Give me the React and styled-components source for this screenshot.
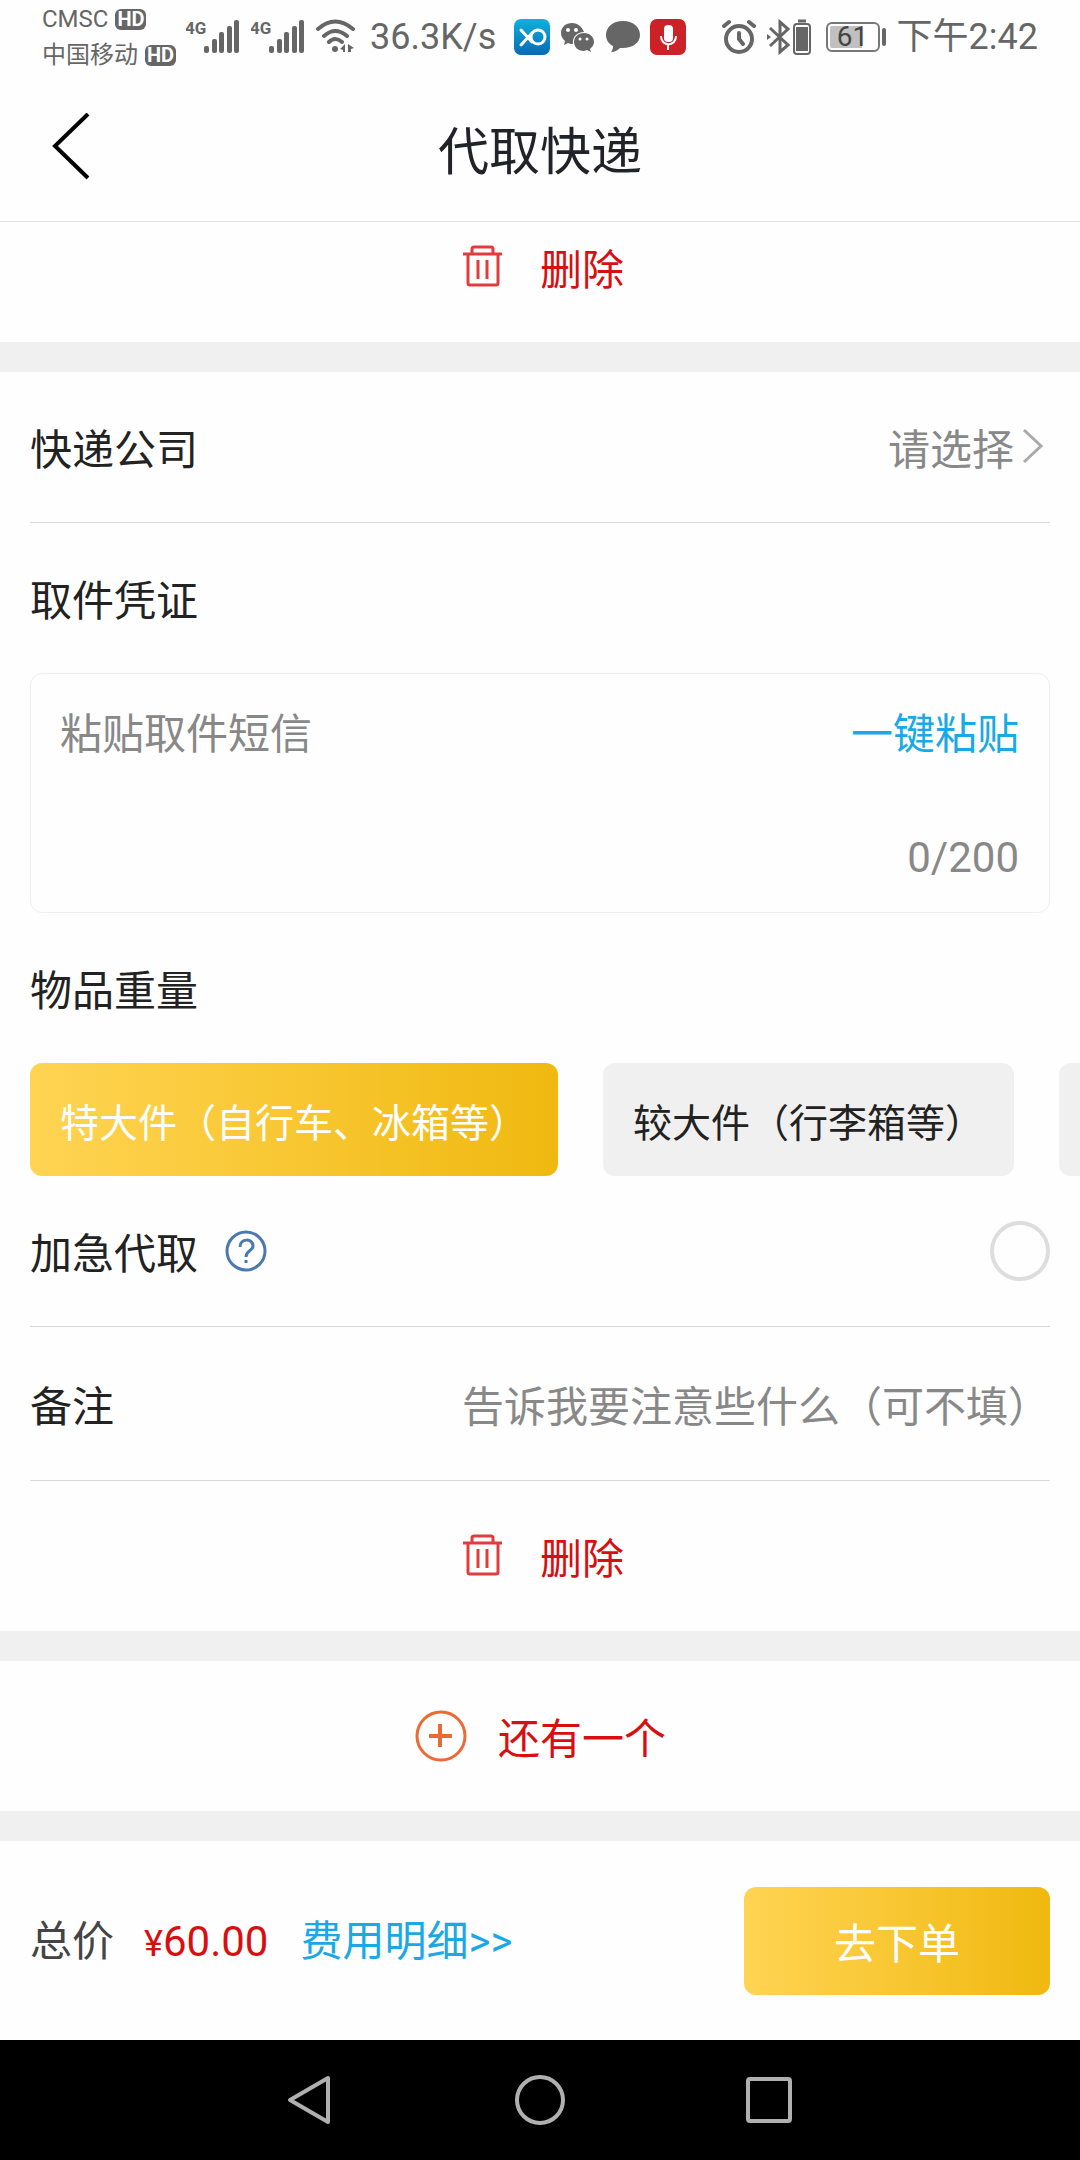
import React, { useState } from 'react'

import styled, { createGlobalStyle, css } from 'styled-components';


const GlobalStyle=createGlobalStyle`
*{
  box-sizing:border-box;
}
body{
  margin:0;
  background-color:#fefefe;
  color:#222;
  font-family:"Noto Sans CJK SC",sans-serif;
  font-size:42px;
  line-height:60px;
}
button,input,textarea{
  font:inherit;
  color:inherit;
  border:none;
  padding:0;
  background:none;
  outline:none;
}
button{
  cursor:pointer;
}
`;

const Page=styled.div`
  min-height:100vh;
  display:flex;
  flex-direction:column;
`;

const Num=styled.span`
  font-family:Roboto,"Noto Sans CJK SC",sans-serif;
`;

/* phone status bar */

const StatusBar=styled.div`
  display:flex;
  align-items:center;
  height:74px;
  padding:0 42px;
  color:#666;
  font-family:Roboto,"Noto Sans CJK SC",sans-serif;
  font-size:36px;
  line-height:36px;
`;

const Carriers=styled.div`
  display:flex;
  flex-direction:column;
  gap:8px;
  width:144px;
  font-size:24px;
  line-height:28px;
`;

const Carrier=styled.div`
  display:flex;
  align-items:center;
  gap:7px;
`;

const Hd=styled.span`
  width:31px;
  height:21px;
  border-radius:6px;
  background-color:#666;
  color:#fff;
  font-size:20px;
  font-weight:700;
  line-height:21px;
  text-align:center;
`;

const Signals=styled.div`
  display:flex;
  align-items:center;
  gap:11px;
  margin-right:14px;
`;

const Apps=styled.div`
  display:flex;
  align-items:center;
  gap:10px;
  margin-left:18px;
`;

const Right=styled.div`
  display:flex;
  align-items:center;
  gap:11px;
  margin-left:auto;
`;

const Battery=styled.div`
  display:flex;
  align-items:center;
  gap:2px;
  margin-left:4px;
`;

const BatteryBody=styled.div`
  width:54px;
  height:30px;
  padding:2px;
  border:2px solid #777;
  border-radius:6px;
  color:#444;
  font-size:28px;
  line-height:22px;
  text-align:center;
  background:linear-gradient(to right,#c0c0c0 70%,transparent 70%) content-box;
`;

const BatteryTip=styled.div`
  width:4px;
  height:18px;
  border-radius:2px;
  background-color:#666;
`;

/* title bar */

const Header=styled.header`
  display:grid;
  grid-template-columns:120px 1fr 120px;
  align-items:center;
  height:148px;
  border-bottom:1px solid #e3e3e3;
`;

const Back=styled.button`
  display:flex;
  padding-left:51px;
`;

const Title=styled.h1`
  margin:0;
  font-size:51px;
  font-weight:400;
  line-height:60px;
  text-align:center;
  color:#222328;
`;

/* form */

const Section=styled.section`
  padding:0 30px;
  border-bottom:30px solid #f0f0f0;
`;

const Action=styled.button`
  display:flex;
  align-items:center;
  justify-content:center;
  gap:30px;
  width:100%;
  height:${({$scrolled}) =>$scrolled ? 120 : 150}px;
  padding-bottom:${({$scrolled}) =>$scrolled ? 30 : 0}px;
  color:#d80f10;
`;

const Row=styled.div`
  display:flex;
  align-items:center;
  justify-content:space-between;
  min-height:151px;
  padding:45px 0;
  border-bottom:1px solid #d8d8d8;
`;

const Label=styled.label`
  white-space:nowrap;
`;

const Heading=styled.h2`
  display:block;
  margin:0;
  padding:45px 0;
  font-size:42px;
  font-weight:400;
`;

const Picker=styled.button`
  display:flex;
  align-items:center;
  color:#888;
`;

const SmsBox=styled.div`
  display:grid;
  grid-template-columns:1fr auto;
  grid-template-rows:1fr auto;
  height:240px;
  padding:27px 30px 24px 29px;
  border:1px solid #eee;
  border-radius:12px;
`;

const Sms=styled.textarea`
  grid-row:1 / 3;
  width:100%;
  resize:none;
  &::placeholder{
    color:#888;
    opacity:1;
  }
`;

const Paste=styled.button`
  align-self:start;
  color:#1aa9e4;
`;

const Count=styled(Num)`
  text-align:right;
  color:#888;
`;

const Chips=styled.div`
  display:flex;
  gap:45px;
  margin-right:-30px;
  overflow:hidden;
`;

const gold=css`
  background:linear-gradient(to right,#ffd453,#f0b910);
  color:#fff;
`;

const Chip=styled.button`
  flex:none;
  min-width:210px;
  height:113px;
  padding:0 30px;
  border-radius:12px;
  background-color:#f0f0f0;
  font-size:39px;
  ${({$active}) =>$active && gold}
`;

const Help=styled.button`
  display:flex;
  margin:0 auto 0 27px;
`;

const Check=styled.input`
  appearance:none;
  width:60px;
  height:60px;
  margin:0;
  border:4px solid #ddd;
  border-radius:50%;
  &:checked{
    border-color:#f0b910;
    background-color:#ffd453;
  }
`;

const Note=styled.input`
  flex:1;
  min-width:0;
  height:63px;
  text-align:right;
  &::placeholder{
    color:#888;
    opacity:1;
  }
`;

/* bottom bar */

const Footer=styled.footer`
  display:flex;
  align-items:center;
  flex:1;
  padding:45px 30px;
`;

const Total=styled.div`
  color:#444;
`;

const Price=styled(Num)`
  margin:0 32px 0 30px;
  color:#d80f10;
`;

const Yen=styled.span`
  font-size:36px;
`;

const Detail=styled.a`
  color:#1aa9e4;
  text-decoration:none;
`;

const Submit=styled.button`
  width:306px;
  height:108px;
  margin-left:auto;
  border-radius:12px;
  ${gold}
`;

const NavBar=styled.nav`
  display:flex;
  align-items:center;
  justify-content:center;
  gap:170px;
  height:120px;
  background-color:#000;
`;

const NavButton=styled.button`
  display:flex;
`;

const Signal=() => (
  <svg width="54" height="36" viewBox="0 0 54 36" fill="#666">
    <text x="-1" y="15" fontSize="17" fontWeight="700" fontFamily="Roboto">4G</text>
    <rect x="18" y="27" width="5" height="7" rx="2"/>
    <rect x="26" y="20" width="5" height="14" rx="2"/>
    <rect x="33" y="13" width="5" height="21" rx="2"/>
    <rect x="41" y="7" width="5" height="27" rx="2"/>
    <rect x="48" y="1" width="5" height="33" rx="2"/>
  </svg>
)

const Wifi=() => (
  <svg width="40" height="36" viewBox="2 0 40 36" fill="none" stroke="#666" strokeWidth="4" strokeLinecap="round">
    <path d="M4 10Q21 -5 39 10M10 17Q21 7 33 17M15 23Q21 17 28 23"/>
    <circle cx="21" cy="30" r="3" fill="#666" stroke="none"/>
    <path d="M26 30L31 25V33H29V31ZM34 25L40 29L37 30V33H34Z" fill="#666" stroke="none"/>
  </svg>
)

const XoApp=() => (
  <svg width="36" height="36" viewBox="0 0 36 36" fill="none">
    <defs>
      <linearGradient id="xo" x1="0" y1="0" x2="0" y2="1">
        <stop offset="0" stopColor="#0fb1dc"/>
        <stop offset="1" stopColor="#0869b5"/>
      </linearGradient>
    </defs>
    <rect width="36" height="36" rx="7" fill="url(#xo)"/>
    <path d="M7 11L18 23M7 26L18 14" stroke="#fff" strokeWidth="3" strokeLinecap="round"/>
    <circle cx="24" cy="18" r="7" stroke="#fff" strokeWidth="3"/>
  </svg>
)

const Wechat=() => (
  <svg width="36" height="32" viewBox="0 0 36 32">
    <path d="M12 2C6 2 1 6 1 12c0 4 2 6 4 8l-1 4 4-2c2 1 3 1 5 1-1-7 4-12 11-12C22 6 18 2 12 2z" fill="#666"/>
    <path d="M24 12c-6 0-10 4-10 9s4 9 10 9l3-1 4 2-1-3c2-2 4-4 4-7 0-5-4-9-10-9z" fill="#666"/>
    <circle cx="8" cy="9" r="2" fill="#fff"/>
    <circle cx="16" cy="9" r="2" fill="#fff"/>
    <circle cx="20" cy="18" r="1.500" fill="#fff"/>
    <circle cx="27" cy="18" r="1.500" fill="#fff"/>
  </svg>
)

const Bubble=() => (
  <svg width="34" height="34" viewBox="0 0 34 34" fill="#666">
    <path d="M17 1C7 1 0 7 0 15c0 5 3 9 7 11 0 3-1 5-2 6 4 0 7-2 9-4 12 1 20-5 20-13S27 1 17 1z"/>
  </svg>
)

const Mic=() => (
  <svg width="36" height="36" viewBox="0 0 36 36" fill="none">
    <rect width="36" height="36" rx="7" fill="#cc2127"/>
    <rect x="14" y="6" width="9" height="17" rx="4" fill="#fff"/>
    <path d="M11 17C11 28 26 28 26 17M18 26V31" stroke="#fff" strokeWidth="2"/>
  </svg>
)

const Alarm=() => (
  <svg width="34" height="36" viewBox="0 0 34 36" fill="none" stroke="#666" strokeWidth="4" strokeLinecap="round">
    <circle cx="17" cy="20" r="13"/>
    <path d="M17 14V20L21 25M2 7L7 3M32 7L27 3"/>
  </svg>
)

const Bluetooth=() => (
  <svg width="44" height="36" viewBox="0 0 44 36" fill="none" stroke="#666" strokeWidth="3">
    <path d="M3 9L21 26L13 33V3L21 10L3 27"/>
    <rect x="27" y="5" width="16" height="30" rx="3" strokeWidth="2"/>
    <rect x="29" y="8" width="12" height="24" fill="#666" stroke="none"/>
    <path d="M31 2H39"/>
    <path d="M0 15L4 18L0 21Z" fill="#666" stroke="none"/>
  </svg>
)

const Trash=() => (
  <svg width="54" height="54" viewBox="0 0 54 54" fill="none" stroke="#e03c3c" strokeWidth="3" strokeLinejoin="round">
    <path d="M7 14H46M16 14V9Q16 7 18 7H35Q37 7 37 9V14M12 14V43Q12 45 14 45H40Q42 45 42 43V14M22 20V39M31 20V39"/>
  </svg>
)

const Plus=() => (
  <svg width="54" height="54" viewBox="0 0 54 54" fill="none" stroke="#ec6a35">
    <circle cx="27" cy="27" r="24" strokeWidth="3"/>
    <path d="M15 27H38M26 15V38" strokeWidth="4"/>
  </svg>
)

const sizes=['特大件（自行车、冰箱等）','较大件（行李箱等）',''];

const App = () => {
  const [size,setSize]=useState(0);
  const [sms,setSms]=useState('');

  return (
    <Page>
      <GlobalStyle/>
      <StatusBar>
        <Carriers>
          <Carrier>CMSC <Hd>HD</Hd></Carrier>
          <Carrier>中国移动 <Hd>HD</Hd></Carrier>
        </Carriers>
        <Signals>
          <Signal/>
          <Signal/>
          <Wifi/>
        </Signals>
        36.3K/s
        <Apps>
          <XoApp/>
          <Wechat/>
          <Bubble/>
          <Mic/>
        </Apps>
        <Right>
          <Alarm/>
          <Bluetooth/>
          <Battery>
            <BatteryBody>61</BatteryBody>
            <BatteryTip/>
          </Battery>
          下午2:42
        </Right>
      </StatusBar>
      <Header>
        <Back aria-label="返回">
          <svg width="40" height="70" viewBox="0 0 40 70" fill="none" stroke="#000" strokeWidth="4">
            <path d="M37 1L4 33L37 65"/>
          </svg>
        </Back>
        <Title>代取快递</Title>
      </Header>
      <Section>
        <Action $scrolled><Trash/>删除</Action>
      </Section>
      <Section>
        <Row>
          <Label htmlFor="company">快递公司</Label>
          <Picker id="company">
            请选择
            <svg width="36" height="42" viewBox="0 0 36 42" fill="none" stroke="#aaa" strokeWidth="3">
              <path d="M10 4L27 20L10 36"/>
            </svg>
          </Picker>
        </Row>
        <Heading as="label" htmlFor="sms">取件凭证</Heading>
        <SmsBox>
          <Sms id="sms" maxLength={200} placeholder="粘贴取件短信" value={sms} onChange={(e) =>setSms(e.target.value)}/>
          <Paste>一键粘贴</Paste>
          <Count>{sms.length}/200</Count>
        </SmsBox>
        <Heading>物品重量</Heading>
        <Chips>
          {sizes.map((s,i) =>(
            <Chip key={i} $active={i===size} aria-pressed={i===size} onClick={() =>setSize(i)}>{s}</Chip>
          ))}
        </Chips>
        <Row>
          <Label htmlFor="urgent">加急代取</Label>
          <Help aria-label="说明">
            <svg width="42" height="42" viewBox="0 0 42 42" fill="none" stroke="#4b78b0" strokeWidth="3">
              <circle cx="21" cy="21" r="19"/>
              <path d="M15 17C15 8 28 8 28 16C28 21 21 20 21 27M21 30V33"/>
            </svg>
          </Help>
          <Check type="checkbox" id="urgent"/>
        </Row>
        <Row>
          <Label htmlFor="note">备注</Label>
          <Note id="note" placeholder="告诉我要注意些什么（可不填）"/>
        </Row>
        <Action><Trash/>删除</Action>
      </Section>
      <Section>
        <Action><Plus/>还有一个</Action>
      </Section>
      <Footer>
        <Total>
          总价
          <Price><Yen>¥</Yen>60.00</Price>
          <Detail href="#detail">费用明细<Num>&gt;&gt;</Num></Detail>
        </Total>
        <Submit>去下单</Submit>
      </Footer>
      <NavBar>
        <NavButton aria-label="后退">
          <svg width="60" height="60" viewBox="0 0 60 60" fill="none" stroke="#b0b0b0" strokeWidth="4" strokeLinejoin="round">
            <path d="M48 8V52L10 30Z"/>
          </svg>
        </NavButton>
        <NavButton aria-label="主页">
          <svg width="60" height="60" viewBox="0 0 60 60" fill="none" stroke="#b0b0b0" strokeWidth="4">
            <circle cx="30" cy="30" r="23"/>
          </svg>
        </NavButton>
        <NavButton aria-label="最近任务">
          <svg width="60" height="60" viewBox="0 0 60 60" fill="none" stroke="#b0b0b0" strokeWidth="4">
            <rect x="8" y="9" width="42" height="42" rx="2"/>
          </svg>
        </NavButton>
      </NavBar>
    </Page>
  )
}

export default App
